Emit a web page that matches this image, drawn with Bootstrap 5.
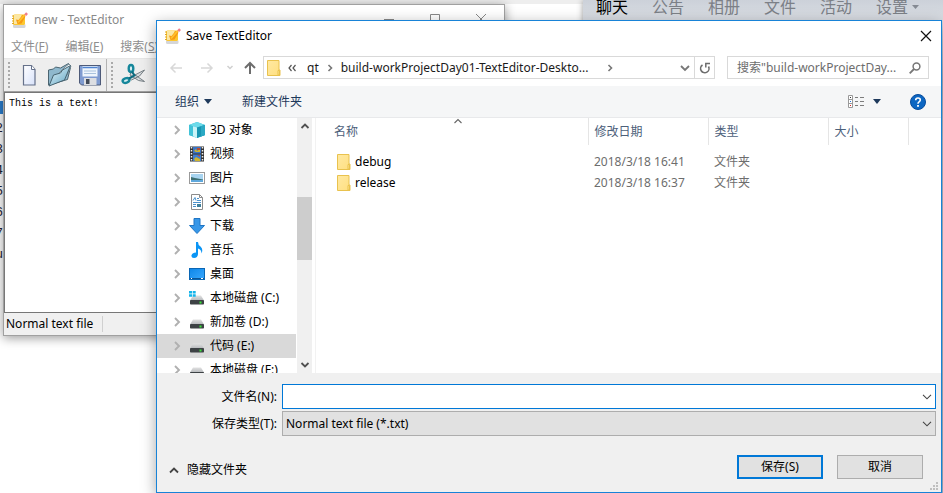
<!DOCTYPE html>
<html lang="zh-CN">
<head>
<meta charset="utf-8">
<meta name="viewport" content="width=device-width, initial-scale=1">
<title>Save TextEditor</title>
<link href="https://cdn.jsdelivr.net/npm/bootstrap@5.3.0/dist/css/bootstrap.min.css" rel="stylesheet">
<style>
:root{--ui:"Noto Sans","Noto Sans CJK SC",sans-serif;--blue:#0078d7;}
body{font-family:var(--ui);font-size:12px;line-height:16px;color:#000;background:#fff}
a{color:inherit;text-decoration:none}
button,input,select,textarea{font:inherit;color:inherit;border-radius:0}
svg{display:block;flex:none}
.plain{border:0;background:none;padding:0}
.desk{min-height:100vh}
.gutter{left:0;top:97px;width:3px;font:13px/21px "Liberation Mono",monospace;color:#223}
.gutter i{width:3px;height:13px;margin:4px 0;background:#2b7fd0}
.topstrip{left:0;right:0;top:0;height:4px;background:#eee}
/* chat window */
.chat{left:583px;right:0;top:0;bottom:0;background:linear-gradient(#ccd1d9,#dadee4 20px,#a9b4c6 80px,#b4c0cf 140px,#a3b8cc);box-shadow:0 0 6px #999}
.chat nav{padding-left:13px;gap:24px;font-size:16px;line-height:15px;color:#7c8087}
.chat .on{color:#000}
/* editor */
.editor{left:3px;top:4px;width:502px;height:332px;background:#f0f0f0;border:1px solid #a0a0a0;box-shadow:0 2px 10px rgba(0,0,0,.4)}
.editor .cap{height:30px;background:#fff;color:#8a8a8a;padding:0 8px;gap:6px}
.editor .wbtns{margin-right:10px}
.editor .menus{height:24px;background:#fff;color:#8e8e8e;padding:0 7px;gap:17px;border-bottom:1px solid #e6e6e6}
.editor .tools{height:33px;padding-left:4px;border-bottom:1px solid #a0a0a0;background:#eee}
.editor .dots{width:2px;height:27px;background:repeating-linear-gradient(#aaa 0 2px,transparent 2px 4px)}
.editor textarea{font:10px/12px "Liberation Mono",monospace;border:1px solid #777;padding:5px 4px;resize:none;outline:0;background:#fff}
.editor .stat{height:22px;padding-left:2px;color:#000}
.editor .stat span{border-right:1px solid #d0d0d0;padding-right:9px}
/* dialog */
.dlg{left:156px;right:1px;top:20px;bottom:0;min-height:400px;background:#fff;border:1px solid #1883d7;box-shadow:0 4px 14px rgba(0,0,0,.35)}
.dlg .cap{height:29px;padding:0 9px 0 8px;gap:5px}
.dlg .navrow{height:36px;padding:6px 12px 7px 12px;color:#1a1a1a}
.arrows{width:94px;padding-right:6px}
.box{border:1px solid #d9d9d9;height:23px}
.addr{padding-left:3px}
.addr .gap-a{margin:0 7px}
.addr .gap-b{margin:0 7px 0 9px}
.addr .gap-c{margin-left:18px}
.refresh{width:20px;border-left:1px solid #d9d9d9;height:21px}
.search{width:202px;margin-left:12px;padding:0 7px 0 9px;color:#6d6d6d}
.search input::placeholder{color:#6d6d6d;opacity:1}
.bar{height:32px;background:#f5f6f7;border-bottom:1px solid #e8e9eb;color:#1e395b;padding:0 15px 0 18px}
.bar .org{gap:5px}
.bar .newf{margin-left:30px}
.bar .helpb{margin-left:29px}
.mid{min-height:0}
.side{width:139px}
.side a{height:24px;padding-left:16px;white-space:nowrap}
.side a svg+svg{margin:0 5px 0 8px}
.side a.sel{background:#d9d9d9}
.scr{width:15px;margin-left:1px;margin-right:3px;background:#f0f0f0}
.scr .thumb{height:63px;margin-top:67px;background:#cdcdcd}
.files{border-left:1px solid #f2f2f2}
.files table{table-layout:fixed;width:100%}
.files th{font-weight:400;color:#4c607a;height:27px;padding:0 6px;border-right:1px solid #e5e5e5;vertical-align:middle}
.files th:first-child{padding-left:18px}
.files th:last-child{border:0}
.files td{height:21px;padding:0 6px;color:#6d6d6d;vertical-align:middle}
.files td:first-child{padding-left:21px;color:#000}
.files tbody:before{content:"";display:block;height:6px}
.c1{width:272px}.c2,.c3{width:120px}.c4{width:80px}
.sort{left:137px;top:0}
.foot{background:#f0f0f0;padding:11px 5px 13px 0;gap:2px}
.foot label{width:120px;margin-right:5px;text-align:right}
.combo{height:25px;border:1px solid #adadad;background:#e1e1e1}
.combo input{outline:0;padding:0 4px}
.combo.hot{border-color:var(--blue);background:#fff}
.pick{background:#e1e1e1 url("data:image/svg+xml,%3Csvg xmlns='http://www.w3.org/2000/svg' width='10' height='6'%3E%3Cpath d='M1 .8l4 4 4-4' fill='none' stroke='%23444' stroke-width='1.1'/%3E%3C/svg%3E") no-repeat right 3px center;appearance:none;padding:0 3px;outline:0}
.drop{padding:0 3px}
.cmd{width:86px;height:24px;border:1px solid #adadad;background:#e1e1e1;padding:0}
.cmd.go{border:2px solid var(--blue)}
.acts{padding:17px 13px 0 12px;gap:14px}
.hide-b{margin-top:5px}
.grip{right:2px;bottom:1px}
</style>
<script src="https://cdn.jsdelivr.net/npm/bootstrap@5.3.0/dist/js/bootstrap.bundle.min.js"></script>
</head>
<body>
<svg width="0" height="0" class="position-absolute">
<defs>
<linearGradient id="gy" x2="1" y2="1"><stop stop-color="#ffe9a2"/><stop offset="1" stop-color="#ffdf80"/></linearGradient>
<linearGradient id="gb" x2="1" y2="1"><stop stop-color="#0d86e8"/><stop offset="1" stop-color="#3aa9ff"/></linearGradient>
<linearGradient id="gf" x2="1" y2="1"><stop stop-color="#e8f6fb"/><stop offset="1" stop-color="#5fa5c4"/></linearGradient>
<linearGradient id="gp" x2="1" y2="1"><stop stop-color="#fff"/><stop offset="1" stop-color="#d8e2fa"/></linearGradient>
<linearGradient id="gd" y2="1" x2="0"><stop stop-color="#e2e2e2"/><stop offset="1" stop-color="#b5b8bb"/></linearGradient>
<symbol id="app" viewBox="0 0 16 16"><path d="M1 12.500h12.500v2q0 1.500-1.500 1.500H2.500Q1 16 1 14.500z" fill="#d5d6d8"/><rect x="1" y="2.500" width="12" height="10.500" rx="1.500" fill="#fdc72f"/><path d="M2 3h7.500v5l-4 4H2z" fill="#fbe7a4"/><path d="M0 4h2M0 6.500h2M0 9h2M0 11.500h2" stroke="#dca62b"/><path d="M4 7.500l1.500 4.500 4-.5 4-7-3-1.500-4 5z" fill="#f79a12"/><path d="M6 10.500l7-8" stroke="#ffc22d" stroke-width="1.800"/><path d="M12.300 2.300l1.800-2 1.900 1.700-1.900 2z" fill="#ee7d8d"/></symbol>
<symbol id="folder" viewBox="0 0 14 16"><path d="M.5.5h11.500v9.500h1v5.500H.5z" fill="url(#gy)" stroke="#e9c24e"/><path d="M11 15v-4.500h1.500V15z" fill="#ffe694" stroke="#e9c24e"/></symbol>
<symbol id="drive" viewBox="0 0 16 16"><path d="M4 5.500h8l3 5H1z" fill="url(#gd)"/><rect x="1" y="10" width="14" height="4.500" rx=".8" fill="#3d4245"/><rect x="10.500" y="11.500" width="2" height="2" fill="#39e639"/></symbol>
<symbol id="tw" viewBox="0 0 8 10"><path d="M2 1l4 4-4 4" fill="none" stroke="#b0b0b0" stroke-width="1.900"/></symbol>
</defs></svg>

<div class="desk position-relative overflow-hidden">
<div class="topstrip position-absolute"></div>
<div class="gutter position-absolute overflow-hidden d-flex flex-column align-items-end" aria-hidden="true"><i></i><span>2</span><span>3</span><span>4</span><span>5</span><span>6</span><span>7</span><span>u</span></div>

<section class="chat position-absolute">
<nav class="d-flex"><a class="on" href="#">聊天</a><a href="#">公告</a><a href="#">相册</a><a href="#">文件</a><a href="#">活动</a><a href="#" class="d-flex align-items-center gap-1">设置 <svg width="7" height="5"><path d="M0 0h7L3.500 4z" fill="#858a93"/></svg></a></nav>
</section>

<section class="editor position-absolute d-flex flex-column">
<div class="cap d-flex align-items-center"><svg width="16" height="16"><use href="#app"/></svg><span>new - TextEditor</span>
<svg class="wbtns ms-auto" width="106" height="14"><path d="M4 6.500h10M50.500 1.500h9v9h-9zM96 1l10 10M106 1L96 11" fill="none" stroke="#888"/></svg></div>
<nav class="menus d-flex align-items-center"><a href="#">文件(<u>F</u>)</a><a href="#">编辑(<u>E</u>)</a><a href="#">搜索(<u>S</u>)</a></nav>
<div class="tools d-flex align-items-center">
<span class="dots me-1"></span>
<button class="plain ms-1" aria-label="New"><svg width="24" height="24" viewBox="0 0 24 24"><path d="M5.500 2.500h8l3.500 4v15.500H5.500z" fill="url(#gp)" stroke="#65718a" stroke-width="1.200"/><path d="M13.500 2.500v4H17" fill="#fff" stroke="#65718a"/></svg></button>
<button class="plain ms-1" aria-label="Open"><svg width="28" height="26" viewBox="0 0 28 26"><path d="M2.500 23V8l5-1 2-2 5 1 8-4.500 2 4-3 12z" fill="#8fb8cd" stroke="#4b6470"/><path d="M8 16L19 5l4-3 2 2-4 9z" fill="#f4f8fa" stroke="#6b7e88" stroke-width=".8"/><path d="M3 24l4.500-11 7-2 2-3 8-4.500-6 14.500z" fill="url(#gf)" stroke="#466370"/></svg></button>
<button class="plain ms-1" aria-label="Save"><svg width="24" height="24" viewBox="0 0 24 24"><path d="M1.500 2.500h21v19.500h-19l-2-2z" fill="#7f9bd0" stroke="#4d5a78"/><rect x="4.500" y="3" width="15" height="10.500" fill="#eef5fc"/><path d="M4.500 4.500h15" stroke="#4f83d0" stroke-width="1.500"/><path d="M6 8h12M6 10.500h12" stroke="#a9c2dd"/><rect x="6" y="15" width="12.500" height="7" fill="#dcdee2"/><rect x="8" y="16" width="3.500" height="5" fill="#414a58"/></svg></button>
<span class="vr mx-1 h-100"></span><span class="dots me-2"></span>
<button class="plain" aria-label="Cut"><svg width="26" height="24" viewBox="0 0 26 24"><path d="M10 9l13.500 9.500-6-1-8.500-5.500zM8 15l15.500-8-5 6-8 4z" fill="#d6dadd" stroke="#6b757b" stroke-width=".9"/><ellipse cx="10" cy="5.500" rx="2.300" ry="3.500" fill="#d7eef2" stroke="#16879b" stroke-width="2.400"/><ellipse cx="5" cy="17.500" rx="3.400" ry="2.300" fill="#d7eef2" stroke="#16879b" stroke-width="2.400" transform="rotate(-20 5 17.500)"/><path d="M11 8.500l2.500 4-5.500 3" fill="none" stroke="#0f6c80" stroke-width="2"/></svg></button>
</div>
<textarea class="flex-grow-1 w-100" aria-label="Document" spellcheck="false">This is a text!</textarea>
<div class="stat d-flex align-items-center"><span>Normal text file</span></div>
</section>

<section class="dlg position-absolute d-flex flex-column" role="dialog" aria-label="Save TextEditor">
<div class="cap d-flex align-items-center flex-shrink-0"><svg width="16" height="16"><use href="#app"/></svg><span>Save TextEditor</span>
<button class="plain ms-auto" aria-label="Close"><svg width="12" height="12"><path d="M1 1l10 10M11 1L1 11" stroke="#111" stroke-width="1.200"/></svg></button></div>
<div class="navrow d-flex align-items-center flex-shrink-0">
<div class="arrows d-flex align-items-center justify-content-between flex-shrink-0">
<button class="plain" aria-label="Back"><svg width="14" height="12"><path d="M13 6H2M6.500 1.500L2 6l4.500 4.500" fill="none" stroke="#d8d8d8" stroke-width="1.500"/></svg></button>
<button class="plain ms-2" aria-label="Forward"><svg width="14" height="12"><path d="M1 6h11M7.500 1.500L12 6l-4.500 4.500" fill="none" stroke="#d8d8d8" stroke-width="1.500"/></svg></button>
<button class="plain ms-1" aria-label="Recent"><svg width="8" height="6"><path d="M1.500 1L4 3.500 6.500 1" fill="none" stroke="#d0d0d0" stroke-width="1.500"/></svg></button>
<button class="plain" aria-label="Up"><svg width="14" height="14"><path d="M7 13V2M2 7l5-5 5 5" fill="none" stroke="#6d6d6d" stroke-width="2"/></svg></button>
</div>
<div class="box addr d-flex align-items-center flex-grow-1">
<svg width="14" height="16"><use href="#folder"/></svg>
<svg class="gap-a" width="8" height="8"><path d="M3.500 1L1 4l2.500 3M7.500 1L5 4l2.500 3" fill="none" stroke="#555" stroke-width="1.200"/></svg>
<a class="ps-1" href="#">qt</a>
<svg class="gap-a" width="8" height="8"><path d="M2.500 1l3 3-3 3" fill="none" stroke="#777" stroke-width="1.600"/></svg>
<a href="#">build-workProjectDay01-TextEditor-Deskto...</a>
<svg class="gap-c" width="8" height="8"><path d="M2.500 1l3 3-3 3" fill="none" stroke="#777" stroke-width="1.600"/></svg>
<button class="plain ms-auto me-1" aria-label="History"><svg width="10" height="8"><path d="M1 2l4 4 4-4" fill="none" stroke="#777" stroke-width="1.800"/></svg></button>
<button class="plain refresh d-flex align-items-center justify-content-center" aria-label="Refresh"><svg width="12" height="12"><path d="M3.500 3A4.200 4.200 0 1 0 9.500 4.500" fill="none" stroke="#6d6d6d" stroke-width="1.600"/><path d="M11 1.500H6.800v4" fill="none" stroke="#6d6d6d" stroke-width="1.500"/></svg></button>
</div>
<div class="box search d-flex align-items-center">
<input class="plain flex-grow-1 w-100" type="text" aria-label="Search" placeholder="搜索&quot;build-workProjectDay...">
<svg width="12" height="12"><circle cx="7.500" cy="4.500" r="3.400" fill="none" stroke="#777" stroke-width="1.500"/><path d="M5 7l-4.300 4.300" stroke="#777" stroke-width="1.800"/></svg>
</div>
</div>
<div class="bar d-flex align-items-center flex-shrink-0">
<button class="plain org d-flex align-items-center">组织 <svg width="8" height="5"><path d="M0 0h8L4 5z" fill="#1e395b"/></svg></button>
<button class="plain newf">新建文件夹</button>
<button class="plain ms-auto d-flex align-items-center" aria-label="View"><svg width="17" height="13"><path d="M.5.5h4v12h-4zM.5 4.500h4M.5 8.500h4" fill="#fff" stroke="#999"/><path d="M7 2.500h3M12 2.500h4M7 6.500h3M12 6.500h4M7 10.500h3M12 10.500h4" stroke="#7d7d7d"/><path d="M2 2.500h1" stroke="#333"/><path d="M2 6.500h1" stroke="#2277dd"/><path d="M2 10.500h1" stroke="#d22"/></svg><svg class="ms-2" width="8" height="5"><path d="M0 0h8L4 5z" fill="#1e395b"/></svg></button>
<button class="plain helpb" aria-label="Help"><svg width="16" height="16"><circle cx="8" cy="8" r="7.500" fill="#0c66c2" stroke="#084c9c"/><path d="M5.700 6.200Q5.700 4 8 4t2.300 2q0 1-1.200 1.800T8 9.800" fill="none" stroke="#fff" stroke-width="1.600"/><rect x="7.100" y="11" width="1.800" height="1.800" fill="#fff"/></svg></button>
</div>
<div class="mid d-flex flex-grow-1 overflow-hidden">
<nav class="side flex-shrink-0 overflow-hidden">
<a href="#" class="d-flex align-items-center"><svg width="8" height="10"><use href="#tw"/></svg><svg width="16" height="16" viewBox="0 0 16 16"><path d="M0 3l8-3 8 3v10l-8 3-8-3z" fill="#34b5cf"/><path d="M0 3l8-3 8 3-8 2.500z" fill="#6cdbea"/><path d="M8 5.500L16 3v10l-8 3z" fill="#1795b2"/><path d="M0 3l4 1.300v10L0 13z" fill="#42c3d8"/><path d="M4 4.300l4 1.200V16l-4-1.700z" fill="#c9f3f7"/><path d="M12 4.200L16 3v10l-4 1.500z" fill="#2ba9c4"/></svg><span>3D 对象</span></a>
<a href="#" class="d-flex align-items-center"><svg width="8" height="10"><use href="#tw"/></svg><svg width="16" height="16" viewBox="0 0 16 16"><rect x="1" y=".5" width="14" height="15" fill="#333"/><path d="M2.500 1v14M13.500 1v14" stroke="#eee" stroke-width="1.500" stroke-dasharray="1.500 1.500"/><rect x="4" y="1" width="8" height="6.500" fill="#3a73c5"/><rect x="4" y="8.500" width="8" height="6.500" fill="#3f7fd0"/><path d="M5 5l2-2 1 2 3-2v3H7zM5 13l2-2 4 2v2H6z" fill="#cfb52d"/><path d="M8 2h3v2H8zM8 9h3v2z" fill="#b64e33"/></svg><span>视频</span></a>
<a href="#" class="d-flex align-items-center"><svg width="8" height="10"><use href="#tw"/></svg><svg width="16" height="16" viewBox="0 0 16 16"><rect x=".5" y="2.500" width="15" height="11" fill="#fff" stroke="#999"/><rect x="2" y="4" width="12" height="8" fill="#a8d4f0"/><path d="M2 7l4 1 8 1.500V12H2z" fill="#3d6f72"/><path d="M2 10h12v2H2z" fill="#5fa8dc"/></svg><span>图片</span></a>
<a href="#" class="d-flex align-items-center"><svg width="8" height="10"><use href="#tw"/></svg><svg width="16" height="16" viewBox="0 0 16 16"><path d="M2.500.5h8l3 3v12h-11z" fill="#fff" stroke="#8c8c8c"/><path d="M10.500.5v3h3" fill="none" stroke="#8c8c8c"/><path d="M4 6.500l2-3 1 3M8 4.500h2M8 6.500h4M4 8.500h8M4 10.500h3M4 12.500h3" fill="none" stroke="#4a91cc"/><rect x="8" y="10" width="4" height="3" fill="#3f7f9a"/></svg><span>文档</span></a>
<a href="#" class="d-flex align-items-center"><svg width="8" height="10"><use href="#tw"/></svg><svg width="16" height="16" viewBox="0 0 16 16"><path d="M5 .5h6v7h4.500L8 15.500.5 7.500H5z" fill="#3797e8" stroke="#1f75c4"/></svg><span>下载</span></a>
<a href="#" class="d-flex align-items-center"><svg width="8" height="10"><use href="#tw"/></svg><svg width="16" height="16" viewBox="0 0 16 16"><path d="M7 0h2q0 3 2.500 4.500Q14.500 7 12.500 11.500 12.500 7.500 9 6.500V12q-.3 4-4 4-3 0-2.500-2.700Q3.500 10.500 7 10.500z" fill="#0b95f5"/></svg><span>音乐</span></a>
<a href="#" class="d-flex align-items-center"><svg width="8" height="10"><use href="#tw"/></svg><svg width="16" height="16" viewBox="0 0 16 16"><rect x=".5" y="2.500" width="15" height="11" fill="url(#gb)" stroke="#0a66b4"/><path d="M1 12.500h14" stroke="#0b5596"/><path d="M2 12.500h1M12 12.500h2" stroke="#fff"/></svg><span>桌面</span></a>
<a href="#" class="d-flex align-items-center"><svg width="8" height="10"><use href="#tw"/></svg><svg width="16" height="16" viewBox="0 0 16 16"><use href="#drive"/><path d="M0 1h3v2.500H0zM3.700 1h3v2.500h-3zM0 4.200h3v2.500H0zM3.700 4.200h3v2.500h-3z" fill="#14b4ea"/></svg><span>本地磁盘 (C:)</span></a>
<a href="#" class="d-flex align-items-center"><svg width="8" height="10"><use href="#tw"/></svg><svg width="16" height="16"><use href="#drive"/></svg><span>新加卷 (D:)</span></a>
<a href="#" class="sel d-flex align-items-center"><svg width="8" height="10"><use href="#tw"/></svg><svg width="16" height="16"><use href="#drive"/></svg><span>代码 (E:)</span></a>
<a href="#" class="d-flex align-items-center"><svg width="8" height="10"><use href="#tw"/></svg><svg width="16" height="16"><use href="#drive"/></svg><span>本地磁盘 (F:)</span></a>
</nav>
<div class="scr d-flex flex-column align-items-center flex-shrink-0 py-1">
<svg width="10" height="8"><path d="M1.500 6L5 2.500 8.500 6" fill="none" stroke="#505050" stroke-width="1.800"/></svg>
<div class="thumb w-100 flex-shrink-0"></div>
<svg class="mt-auto" width="10" height="8"><path d="M1.500 2L5 5.500 8.500 2" fill="none" stroke="#505050" stroke-width="1.800"/></svg>
</div>
<div class="files flex-grow-1 position-relative overflow-hidden">
<svg class="sort position-absolute" width="10" height="6"><path d="M1.500 5L5 1.500 8.500 5" fill="none" stroke="#666" stroke-width="1.100"/></svg>
<table>
<colgroup><col class="c1"><col class="c2"><col class="c3"><col class="c4"><col></colgroup>
<thead><tr><th>名称</th><th>修改日期</th><th>类型</th><th>大小</th><th></th></tr></thead>
<tbody>
<tr><td><a href="#" class="d-flex align-items-center gap-1"><svg width="14" height="16"><use href="#folder"/></svg>debug</a></td><td>2018/3/18 16:41</td><td>文件夹</td><td></td><td></td></tr>
<tr><td><a href="#" class="d-flex align-items-center gap-1"><svg width="14" height="16"><use href="#folder"/></svg>release</a></td><td>2018/3/18 16:37</td><td>文件夹</td><td></td><td></td></tr>
</tbody></table>
</div>
</div>
<form class="foot d-flex flex-column flex-shrink-0">
<div class="d-flex align-items-center"><label for="fn">文件名(N):</label><div class="combo hot d-flex flex-grow-1"><input id="fn" type="text" class="plain flex-grow-1"><button type="button" class="plain drop" aria-label="Show names"><svg width="10" height="6"><path d="M1 .8l4 4 4-4" fill="none" stroke="#444" stroke-width="1.100"/></svg></button></div></div>
<div class="d-flex align-items-center"><label for="ty">保存类型(T):</label><select id="ty" class="combo pick flex-grow-1"><option>Normal text file (*.txt)</option></select></div>
<div class="acts d-flex align-items-center">
<button type="button" class="plain hide-b d-flex align-items-center gap-2"><svg width="10" height="8"><path d="M1 6.500l4-4 4 4" fill="none" stroke="#444" stroke-width="1.800"/></svg>隐藏文件夹</button>
<button type="submit" class="cmd go ms-auto">保存(S)</button><button type="button" class="cmd">取消</button>
</div>
</form>
<svg class="grip position-absolute" width="9" height="9"><path d="M6 0h2v2H6zM3 3h2v2H3zM6 3h2v2H6zM0 6h2v2H0zM3 6h2v2H3zM6 6h2v2H6z" fill="#bfbfbf"/></svg>
</section>
</div>
</body>
</html>
